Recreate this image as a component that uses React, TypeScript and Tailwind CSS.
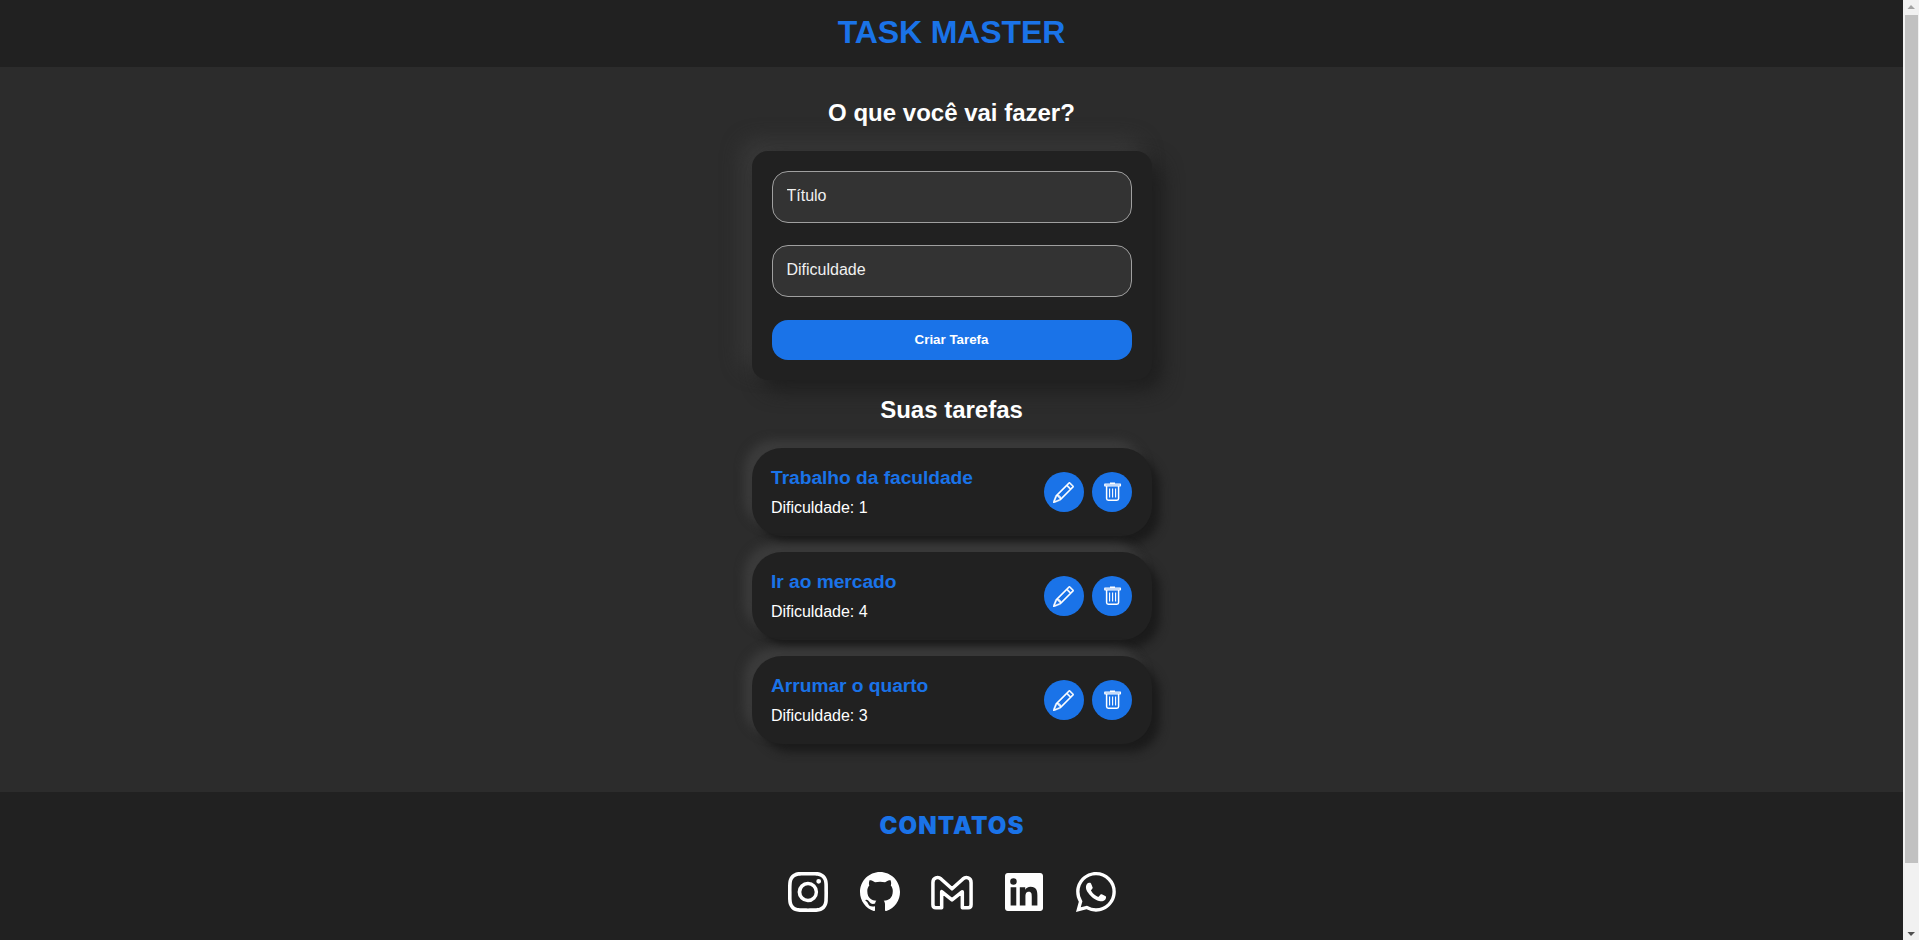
import { useState } from "react";
import { BsGithub, BsInstagram, BsPencil, BsWhatsapp } from "react-icons/bs";

type Task = { id: number; title: string; difficulty: number };

const tasks: Task[] = [
  { id: 1, title: "Trabalho da faculdade", difficulty: 1 },
  { id: 2, title: "Ir ao mercado", difficulty: 4 },
  { id: 3, title: "Arrumar o quarto", difficulty: 3 },
];

function GmailIcon() {
  return (
    <svg viewBox="0 0 48 40" className="h-[35px] w-[42px] shrink-0" fill="none" stroke="currentColor" strokeWidth="4" strokeLinejoin="round">
      <path d="M2.2 34V8.5C2.2 3 8 1.5 11.5 4.5L24 15.8L36.5 4.5C40 1.5 45.8 3 45.8 8.5V34Q45.8 37.4 42.4 37.4H35.8V19L24 28.5L12.2 19V37.4H5.6Q2.2 37.4 2.2 34Z" />
    </svg>
  );
}

function LinkedinIcon() {
  return (
    <svg viewBox="0 0 24 24" className="size-[38px]" fill="currentColor">
      <path d="M20.447 20.452h-3.554v-5.569c0-1.328-.027-3.037-1.852-3.037-1.853 0-2.136 1.445-2.136 2.939v5.667H9.351V9h3.414v1.561h.046c.477-.9 1.637-1.85 3.37-1.85 3.601 0 4.267 2.37 4.267 5.455v6.286zM5.337 7.433a2.062 2.062 0 0 1-2.063-2.065 2.064 2.064 0 1 1 2.063 2.065zm1.782 13.019H3.555V9h3.564v11.452zM22.225 0H1.771C.792 0 0 .774 0 1.729v20.542C0 23.227.792 24 1.771 24h20.451C23.2 24 24 23.227 24 22.271V1.729C24 .774 23.2 0 22.222 0h.003z" />
    </svg>
  );
}

function TrashIcon() {
  return (
    <svg viewBox="0 0 20 20" className="size-5" fill="none" stroke="currentColor" strokeLinejoin="round">
      <path d="M8 1.2h5M2.8 2.2h15.6v1.6H2.8z" strokeWidth="1.3" />
      <path d="M4.6 4v12.6q0 1.7 1.7 1.7h8.6q1.7 0 1.7-1.7V4" strokeWidth="1.5" />
      <path d="M7.6 6.5v9M10.6 6.5v9M13.6 6.5v9" strokeWidth="1.1" />
    </svg>
  );
}

function TaskCard({ task }: { task: Task }) {
  return (
    <li className="flex h-[88px] items-start justify-between rounded-[30px] bg-[#212121] pr-5 pl-[19.5px] shadow-[8px_8px_10px_#1b1b1b,-8px_-8px_10px_#3b3b3b]">
      <div className="pt-[19px]">
        <h3 className="text-[19.2px] leading-[22px] font-bold tracking-[-0.03px] text-[#1a73e8]">{task.title}</h3>
        <p className="mt-[10px] text-base leading-[18px] tracking-[-0.03px] text-white">Dificuldade: {task.difficulty}</p>
      </div>
      <div className="flex gap-2 pt-6 text-white">
        <button aria-label="Editar" className="flex size-10 items-center justify-center rounded-full bg-[#1a73e8]">
          <BsPencil size={21} strokeWidth={0.3} />
        </button>
        <button aria-label="Excluir" className="flex size-10 items-center justify-center rounded-full bg-[#1a73e8]">
          <TrashIcon />
        </button>
      </div>
    </li>
  );
}

function Scrollbar() {
  return (
    <div className="flex w-4 shrink-0 flex-col items-center bg-[#f1f1f1]">
      <svg viewBox="0 0 16 15" className="h-[15px] w-4">
        <path d="M4.5 9 8 5l4 4z" fill="#a3a3a3" />
      </svg>
      <div className="h-[848px] w-[13px] bg-[#c1c1c1]" />
      <svg viewBox="0 0 16 16" className="mt-auto h-4 w-4">
        <path d="M4.5 8 8 12l4-4z" fill="#505050" />
      </svg>
    </div>
  );
}

const inputClass =
  "block h-[52px] w-full rounded-2xl border border-[#a0a0a0] bg-[#333333] px-[14px] pb-[2px] text-base text-white outline-none placeholder:text-[#f0f0f0]";

export default function App() {
  const [title, setTitle] = useState("");
  const [difficulty, setDifficulty] = useState("");

  return (
    <div className="flex h-[940px] overflow-hidden font-['Liberation_Sans',Arial,sans-serif]">
      <div className="flex min-w-0 flex-1 flex-col bg-[#2c2c2c]">
        <header className="h-[67px] shrink-0 bg-[#212121] pt-[14px] text-center">
          <h1 className="text-[32px] leading-[37px] font-bold tracking-[-0.1px] text-[#1a73e8]">TASK MASTER</h1>
        </header>

        <main className="mx-auto flex h-[725px] w-[400px] shrink-0 flex-col">
          <h2 className="mt-8 text-center text-2xl leading-[28px] font-bold text-white">O que você vai fazer?</h2>
          <form
            onSubmit={(e) => e.preventDefault()}
            className="mt-6 h-[229px] rounded-2xl bg-[#212121] p-5 shadow-[10px_10px_20px_#1e1e1e,-10px_-10px_20px_#3a3a3a]"
          >
            <input className={inputClass} placeholder="Título" value={title} onChange={(e) => setTitle(e.target.value)} />
            <input
              className={`mt-[22px] ${inputClass}`}
              placeholder="Dificuldade"
              value={difficulty}
              onChange={(e) => setDifficulty(e.target.value)}
            />
            <button className="mt-[23px] block h-10 w-full rounded-2xl bg-[#1a73e8] text-[13.33px] font-bold text-white">
              Criar Tarefa
            </button>
          </form>

          <h2 className="mt-[16px] text-center text-2xl leading-[28px] font-bold text-white">Suas tarefas</h2>
          <ul className="mt-6 flex flex-col gap-4">
            {tasks.map((task) => (
              <TaskCard key={task.id} task={task} />
            ))}
          </ul>
        </main>

        <footer className="flex flex-1 flex-col items-center bg-[#212121] pt-[17px]">
          <h2 className="-mr-px font-['Arial_Black','Inter',sans-serif] text-2xl leading-[34px] font-black tracking-[1.1px] text-[#1a73e8]">
            CONTATOS
          </h2>
          <div className="mt-[29px] flex gap-8 text-white">
            <a className="flex size-10 items-center justify-center"><BsInstagram size={40} /></a>
            <a className="flex size-10 items-center justify-center"><BsGithub size={40} /></a>
            <a className="flex size-10 items-center justify-center"><GmailIcon /></a>
            <a className="flex size-10 items-center justify-center"><LinkedinIcon /></a>
            <a className="flex size-10 items-center justify-center"><BsWhatsapp size={40} /></a>
          </div>
        </footer>
      </div>
      <Scrollbar />
    </div>
  );
}
